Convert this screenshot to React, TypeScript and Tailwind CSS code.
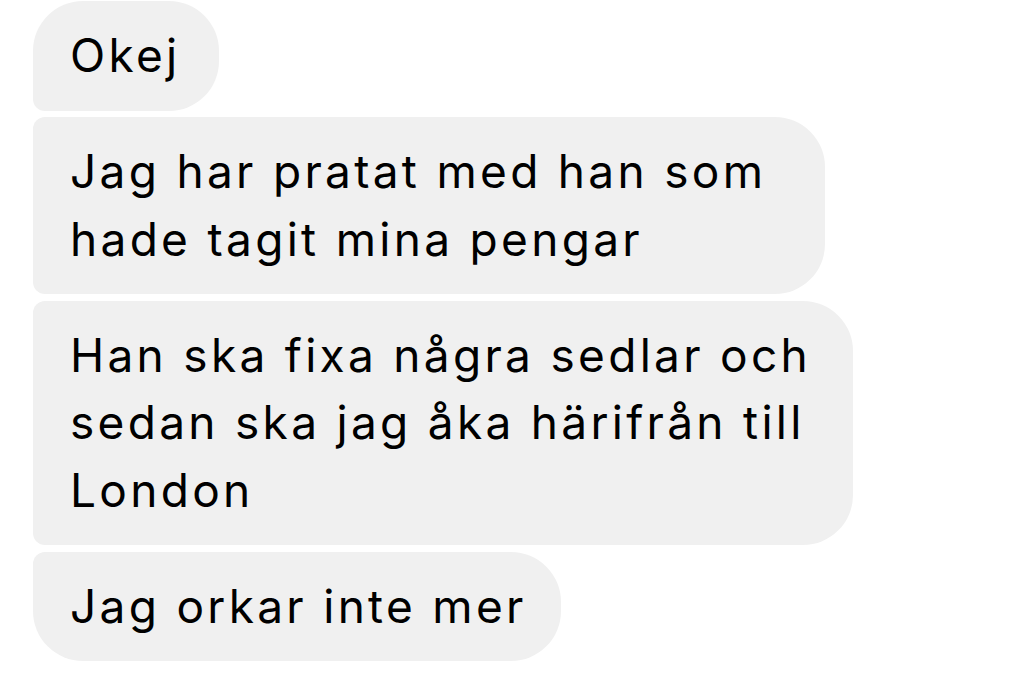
import React from "react";

function Bubble({
  lines,
  className,
}: {
  lines: string[];
  className: string;
}) {
  return (
    <div
      className={`self-start bg-[#f0f0f0] text-black text-[46px] leading-[67.5px] tracking-[3.3px] py-[21px] pl-[37px] whitespace-nowrap ${className}`}
    >
      {lines.map((l, i) => (
        <div key={i}>{l}</div>
      ))}
    </div>
  );
}

export default function App() {
  return (
    <div
      className="w-[1024px] h-[674px] bg-white overflow-hidden pl-[33px] pt-[1px] flex flex-col gap-[6.5px]"
      style={{ fontFamily: "Inter, 'Liberation Sans', sans-serif" }}
    >
      <Bubble
        lines={["Okej"]}
        className="pr-[38px] rounded-tl-[50px] rounded-tr-[50px] rounded-br-[50px] rounded-bl-[12px]"
      />
      <Bubble
        lines={["Jag har pratat med han som", "hade tagit mina pengar"]}
        className="pr-[59px] rounded-tl-[12px] rounded-bl-[12px] rounded-tr-[50px] rounded-br-[50px]"
      />
      <Bubble
        lines={["Han ska fixa några sedlar och", "sedan ska jag åka härifrån till", "London"]}
        className="pr-[42px] rounded-tl-[12px] rounded-bl-[12px] rounded-tr-[50px] rounded-br-[50px]"
      />
      <Bubble
        lines={["Jag orkar inte mer"]}
        className="pr-[34px] rounded-tl-[12px] rounded-bl-[50px] rounded-tr-[50px] rounded-br-[50px]"
      />
    </div>
  );
}
